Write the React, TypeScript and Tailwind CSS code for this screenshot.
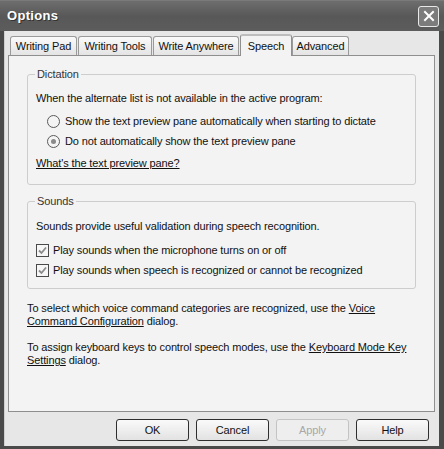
import React from 'react';

const FONT = { fontFamily: '"Liberation Sans", Arial, sans-serif' };

const tabs = [
	{ label: 'Writing Pad', w: 'w-[67px]' },
	{ label: 'Writing Tools', w: 'w-[74px]' },
	{ label: 'Write Anywhere', w: 'w-[86px]' },
	{ label: 'Speech', w: 'w-[52px]', active: true },
	{ label: 'Advanced', w: 'w-[57px]' },
];

function Radio({ checked, label }: { checked?: boolean; label: string }) {
	return (
		<div className="flex items-center h-[20px] pl-[11px]">
			<span className="w-[13px] h-[13px] rounded-full border border-[#5a5a5a] bg-[#f4f4f4] flex items-center justify-center shrink-0">
				{checked && <span className="w-[5px] h-[5px] rounded-full bg-[#8a8a8a]" />}
			</span>
			<span className="ml-[5px]">{label}</span>
		</div>
	);
}

function Check({ label }: { label: string }) {
	return (
		<div className="flex items-center h-[20px]">
			<span className="w-[13px] h-[13px] border border-[#4a4a4a] bg-[#f6f6f6] flex items-center justify-center shrink-0">
				<svg width="9" height="9" viewBox="0 0 9 9">
					<path d="M1 4.5 L3.5 7 L8 1.5" fill="none" stroke="#8a8a8a" strokeWidth="1.8" />
				</svg>
			</span>
			<span className="ml-[4px]">{label}</span>
		</div>
	);
}

function GroupBox({ title, className, children }: { title: string; className?: string; children: React.ReactNode }) {
	return (
		<div className={`relative border border-[#cdcdcd] rounded-[3px] ${className ?? ''}`}>
			<span className="absolute left-[7px] top-[-8px] px-[2px] bg-[#f3f3f3] text-[#333] leading-[14px]">{title}</span>
			{children}
		</div>
	);
}

function Btn({ label, disabled }: { label: string; disabled?: boolean }) {
	return (
		<button
			className={`w-[73px] h-[22px] rounded-[3px] border flex items-center justify-center ${
				disabled ? 'border-[#c4c4c4] text-[#a8a8a8] bg-[#eeeeee]' : 'border-[#2e2e2e] text-[#111] bg-gradient-to-b from-[#fafafa] to-[#e2e2e2]'
			}`}
		>
			{label}
		</button>
	);
}

export default function App() {
	return (
		<div className="w-[444px] h-[449px] bg-[#4a4a4a] flex flex-col text-[11px] tracking-[-0.12px] text-[#111]" style={FONT}>
			<div className="h-[31px] shrink-0 flex items-center justify-between pl-[7px] pr-[5px] bg-gradient-to-b from-[#6e6e6e] via-[#585858] to-[#5c5c5c] border-t border-[#7a7a7a]">
				<span className="text-white font-bold text-[13px] tracking-[0.3px]" style={{ textShadow: '1px 1px 0 #333' }}>
					Options
				</span>
				<span className="w-[21px] h-[21px] rounded-[3px] border border-[#e8e8e8] bg-[#7c7c7c] flex items-center justify-center">
					<svg width="12" height="12" viewBox="0 0 12 12">
						<path d="M2 2 L10 10 M10 2 L2 10" stroke="#fff" strokeWidth="2" strokeLinecap="square" />
					</svg>
				</span>
			</div>
			<div className="flex-1 ml-[4px] mr-[5px] mb-[3px] bg-[#e7e7e7] border-l border-[#cfcfcf] flex flex-col pt-[2px]">
				<div className="flex pl-[5px] h-[22px] items-end">
					{tabs.map((t) =>
						t.active ? (
							<div
								key={t.label}
								className={`${t.w} h-[22px] mb-[-1px] relative z-10 bg-[#f3f3f3] border border-b-0 border-[#8f8f8f] rounded-t-[3px] border-t-2 border-t-[#bdbdbd] flex items-start justify-center pt-[2px]`}
							>
								{t.label}
							</div>
						) : (
							<div
								key={t.label}
								className={`${t.w} h-[19px] mr-[1px] bg-gradient-to-b from-[#fafafa] to-[#e4e4e4] border border-b-0 border-[#9a9a9a] rounded-t-[3px] flex items-center justify-center pt-[1px]`}
							>
								{t.label}
							</div>
						)
					)}
				</div>
				<div className="ml-[3px] mr-[4px] h-[357px] bg-[#f3f3f3] border border-[#8f8f8f] px-[18px] pt-[18px]">
					<GroupBox title="Dictation" className="h-[111px] pt-[15px] px-[8px]">
						<div className="h-[17px]">When the alternate list is not available in the active program:</div>
						<div className="mt-[4px]">
							<Radio label="Show the text preview pane automatically when starting to dictate" />
							<Radio checked label="Do not automatically show the text preview pane" />
						</div>
						<div className="mt-[4px] h-[17px]">
							<span className="underline">What's the text preview pane?</span>
						</div>
					</GroupBox>
					<GroupBox title="Sounds" className="mt-[16px] h-[88px] pt-[16px] px-[8px]">
						<div className="h-[17px]">Sounds provide useful validation during speech recognition.</div>
						<div className="mt-[5px]">
							<Check label="Play sounds when the microphone turns on or off" />
							<Check label="Play sounds when speech is recognized or cannot be recognized" />
						</div>
					</GroupBox>
					<div className="mt-[13px] leading-[13px]">
						<div>
							To select which voice command categories are recognized, use the <span className="underline">Voice</span>
						</div>
						<div>
							<span className="underline">Command Configuration</span> dialog.
						</div>
					</div>
					<div className="mt-[13px] leading-[13px]">
						<div>
							To assign keyboard keys to control speech modes, use the <span className="underline">Keyboard Mode Key</span>
						</div>
						<div>
							<span className="underline">Settings</span> dialog.
						</div>
					</div>
				</div>
				<div className="flex justify-end gap-[7px] pr-[10px] pt-[7px]">
					<Btn label="OK" />
					<Btn label="Cancel" />
					<Btn label="Apply" disabled />
					<Btn label="Help" />
				</div>
			</div>
		</div>
	);
}
